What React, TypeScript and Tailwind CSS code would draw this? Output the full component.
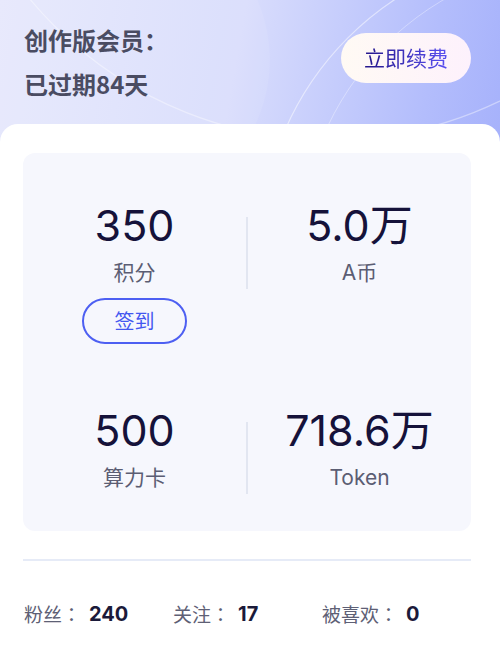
const stats = [
  [
    { value: "350", label: "积分", sign: true },
    { value: "5.0万", label: "A币" },
  ],
  [
    { value: "500", label: "算力卡" },
    { value: "718.6万", label: "Token" },
  ],
]

const social = [
  { label: "粉丝", value: "240" },
  { label: "关注", value: "17" },
  { label: "被喜欢", value: "0" },
]

const cjk = "font-['Noto_Sans_CJK_SC',sans-serif]"
const num = "font-['Inter','Noto_Sans_CJK_SC',sans-serif]"

const Stat = ({ value, label, sign }: { value: string; label: string; sign?: boolean }) => (
  <div className="flex-1 flex flex-col items-center">
    <div className={`${num} text-[43px] leading-[48px] text-[#15123a]`}>{value}</div>
    <div className={`${num} mt-[11px] text-[21px] leading-[26px] text-[#5b5d73]`}>{label}</div>
    {sign && (
      <button
        className={`${cjk} mt-[12px] h-[46px] w-[105px] rounded-full border-2 border-[#4d5ff2] text-[20px] text-[#4457f0]`}
      >
        签到
      </button>
    )}
  </div>
)

export default function App() {
  return (
    <div className="relative h-[659px] w-[500px] overflow-hidden bg-[linear-gradient(100deg,#e6e8fc_0%,#d9ddfc_40%,#b3bdfc_72%,#98a5fa_100%)]">
      <svg className="absolute inset-0" width="500" height="130" viewBox="0 0 500 130" fill="none">
        <circle cx="330" cy="-250" r="390" stroke="white" strokeOpacity="0.4" strokeWidth="1.2" />
        <circle cx="560" cy="250" r="300" stroke="white" strokeOpacity="0.5" strokeWidth="1.2" />
        <circle cx="590" cy="250" r="290" stroke="white" strokeOpacity="0.35" strokeWidth="1" />
        <circle cx="120" cy="60" r="150" fill="white" fillOpacity="0.08" />
      </svg>

      <div className="relative flex h-[124px] items-start justify-between pl-[24px] pr-[29px]">
        <div className={`${cjk} pt-[18px] text-[24px] font-bold leading-[44px] text-[#4a4c62]`}>
          <div>创作版会员：</div>
          <div>已过期84天</div>
        </div>
        <button className="mt-[33px] h-[50px] w-[130px] rounded-full bg-[linear-gradient(90deg,#fffaf4,#fdf1fc)]">
          <span
            className={`${cjk} bg-[linear-gradient(90deg,#24168a,#5a50f2)] bg-clip-text text-[21px] text-transparent`}
          >
            立即续费
          </span>
        </button>
      </div>

      <div className="relative h-[535px] rounded-t-[18px] bg-white pl-[23px] pr-[29px] pt-[29px]">
        <div className="rounded-[12px] bg-[#f6f7fd] pb-[37px] pt-[48px]">
          {stats.map((row, i) => (
            <div key={i} className={`flex items-start ${i > 0 ? "mt-[62px]" : ""}`}>
              <Stat {...row[0]} />
              <div className="mt-4 h-[72px] w-[2px] bg-[#e2e6f1]" />
              <Stat {...row[1]} />
            </div>
          ))}
        </div>

        <div className="mt-[28px] h-[2px] bg-[#e6ebf7]" />

        <div className="mt-[39px] grid grid-cols-3 pl-px">
          {social.map((s) => (
            <div key={s.label} className="flex items-center leading-[28px] text-[19px] text-[#5e6075]">
              <span className={cjk}>{s.label}</span>
              <span className="font-['Noto_Sans_CJK_TC',sans-serif]">：</span>
              <span className={`${num} ml-2 text-[20px] font-bold text-[#1b1a3a]`}>{s.value}</span>
            </div>
          ))}
        </div>
      </div>
    </div>
  )
}
